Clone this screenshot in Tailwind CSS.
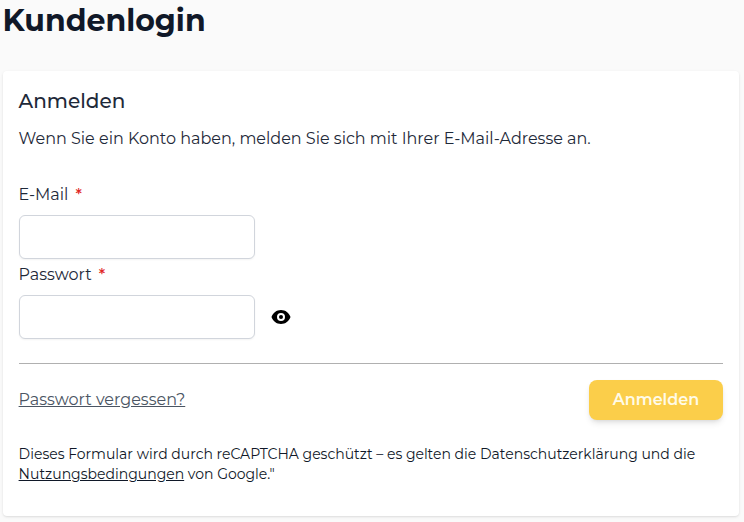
<!DOCTYPE html>
<html lang="de">
<head>
  <meta charset="UTF-8" />
  <meta name="viewport" content="width=device-width, initial-scale=1.0"/>
  <title>Kundenlogin</title>
  <script src="https://cdn.jsdelivr.net/npm/@tailwindcss/browser@4"></script>
</head>
<body class="bg-[#fafafa] font-['Montserrat','Inter',sans-serif] font-normal text-gray-800 h-[522px] overflow-hidden pl-[2.6px] pr-[5px]">

  <!-- Page title -->
  <h1 class="h-[71px] pt-[3px] text-[30px] leading-9 font-bold text-gray-900 whitespace-nowrap">Kundenlogin</h1>

  <!-- Login card -->
  <main class="h-[445px] bg-white rounded-sm shadow-sm px-4 pt-4">
    <form onsubmit="return false">
      <h2 class="text-xl leading-7 font-medium"><span>Anmelden</span></h2>
      <p class="mt-3 leading-6 whitespace-nowrap"><span>Wenn Sie ein Konto haben, melden Sie sich mit Ihrer E-Mail-Adresse an.</span></p>

      <div class="mt-8">
        <label for="email" class="flex h-6 gap-[7px] leading-6"><span>E-Mail</span><span class="text-[#e02424] font-medium">*</span></label>
        <input id="email" type="email" class="block mt-2 w-[236px] h-11 rounded-md border border-gray-300 bg-white shadow-xs px-3" />
      </div>

      <div class="mt-1">
        <label for="password" class="flex h-6 gap-[7px] leading-6"><span>Passwort</span><span class="text-[#e02424] font-medium">*</span></label>
        <div class="mt-2 flex items-center gap-4">
          <input id="password" type="password" class="block w-[236px] h-11 rounded-md border border-gray-300 bg-white shadow-xs px-3" />
          <button type="button" aria-label="Passwort anzeigen">
            <svg class="w-5 h-5" viewBox="0 0 20 20">
              <path fill="#000" fill-rule="evenodd" d="M10 3C5.6 3 1.9 5.8 0.5 10C1.9 14.2 5.6 17 10 17s8.1-2.8 9.5-7C18.1 5.8 14.4 3 10 3zM14 10a4 4 0 1 1-8 0 4 4 0 0 1 8 0z"/>
              <circle cx="10" cy="10" r="2" fill="#000"/>
            </svg>
          </button>
        </div>
      </div>

      <!-- Actions -->
      <div class="mt-6 flex items-center justify-between border-t border-[#b0b0b0] pt-4">
        <a href="#" class="underline text-[#4b5563]"><span>Passwort vergessen?</span></a>
        <button type="submit" class="w-[134px] h-10 rounded-lg bg-[#fbce4a] text-[#fffbe8] font-semibold shadow-md"><span>Anmelden</span></button>
      </div>

      <p class="mt-6 text-sm leading-5 text-gray-900 whitespace-nowrap">
        <span>Dieses Formular wird durch reCAPTCHA geschützt – es gelten die Datenschutzerklärung und die</span><br />
        <a href="#" class="underline">Nutzungsbedingungen</a> <span>von Google."</span>
      </p>
    </form>
  </main>

</body>
</html>
